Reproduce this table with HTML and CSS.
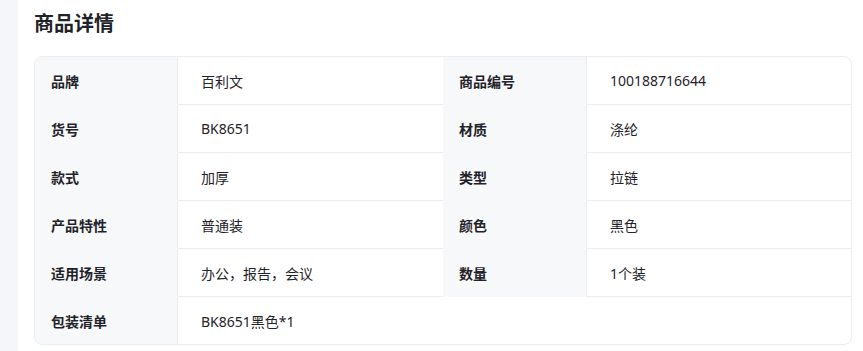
FILE: index.html
```html
<!DOCTYPE html>
<html lang="zh-CN">
<head>
<meta charset="utf-8">
<title>商品详情</title>
<link rel="stylesheet" href="styles.css">
</head>
<body>
<div class="page">
  <aside class="side"></aside>
  <main class="main">
    <h2 class="title">商品详情</h2>
    <div class="specs">
      <div class="label">品牌</div><div class="value">百利文</div>
      <div class="label">商品编号</div><div class="value">100188716644</div>
      <div class="label">货号</div><div class="value">BK8651</div>
      <div class="label">材质</div><div class="value">涤纶</div>
      <div class="label">款式</div><div class="value">加厚</div>
      <div class="label">类型</div><div class="value">拉链</div>
      <div class="label">产品特性</div><div class="value">普通装</div>
      <div class="label">颜色</div><div class="value">黑色</div>
      <div class="label">适用场景</div><div class="value">办公，报告，会议</div>
      <div class="label">数量</div><div class="value">1个装</div>
      <div class="label last">包装清单</div><div class="value wide last">BK8651黑色*1</div>
    </div>
  </main>
</div>
</body>
</html>
```

FILE: styles.css
```css
* { box-sizing: border-box; }
html, body {
  margin: 0;
  padding: 0;
  background: #ffffff;
  font-family: "Noto Sans", "Noto Sans CJK SC", sans-serif;
  color: #1f2329;
}
.page {
  display: flex;
  height: 351px;
}
.side {
  width: 18px;
  flex: none;
  background: #f5f6f9;
}
.main {
  flex: 1;
  padding: 10px 11px 0 16px;
}
.title {
  margin: 0 0 18px 0;
  font-size: 20px;
  line-height: 28px;
  font-weight: 700;
  color: #1f2329;
}
.specs {
  display: grid;
  grid-template-columns: 142px 266px 143px 265px;
  border: 1px solid #ebedf0;
  border-radius: 8px;
  overflow: hidden;
  width: 818px;
}
.label, .value {
  height: 48px;
  display: flex;
  align-items: center;
  font-size: 14px;
  border-bottom: 1px solid #ebedf0;
}
.label {
  background: #f7f8fa;
  border-bottom-color: #f7f8fa;
  padding-left: 16px;
  font-weight: 700;
}
.value {
  border-left: 1px solid #ebedf0;
  padding-left: 23px;
  font-weight: 400;
}
.label.last, .value.last {
  border-bottom: none;
  height: 47px;
}
.wide {
  grid-column: span 3;
}
```
